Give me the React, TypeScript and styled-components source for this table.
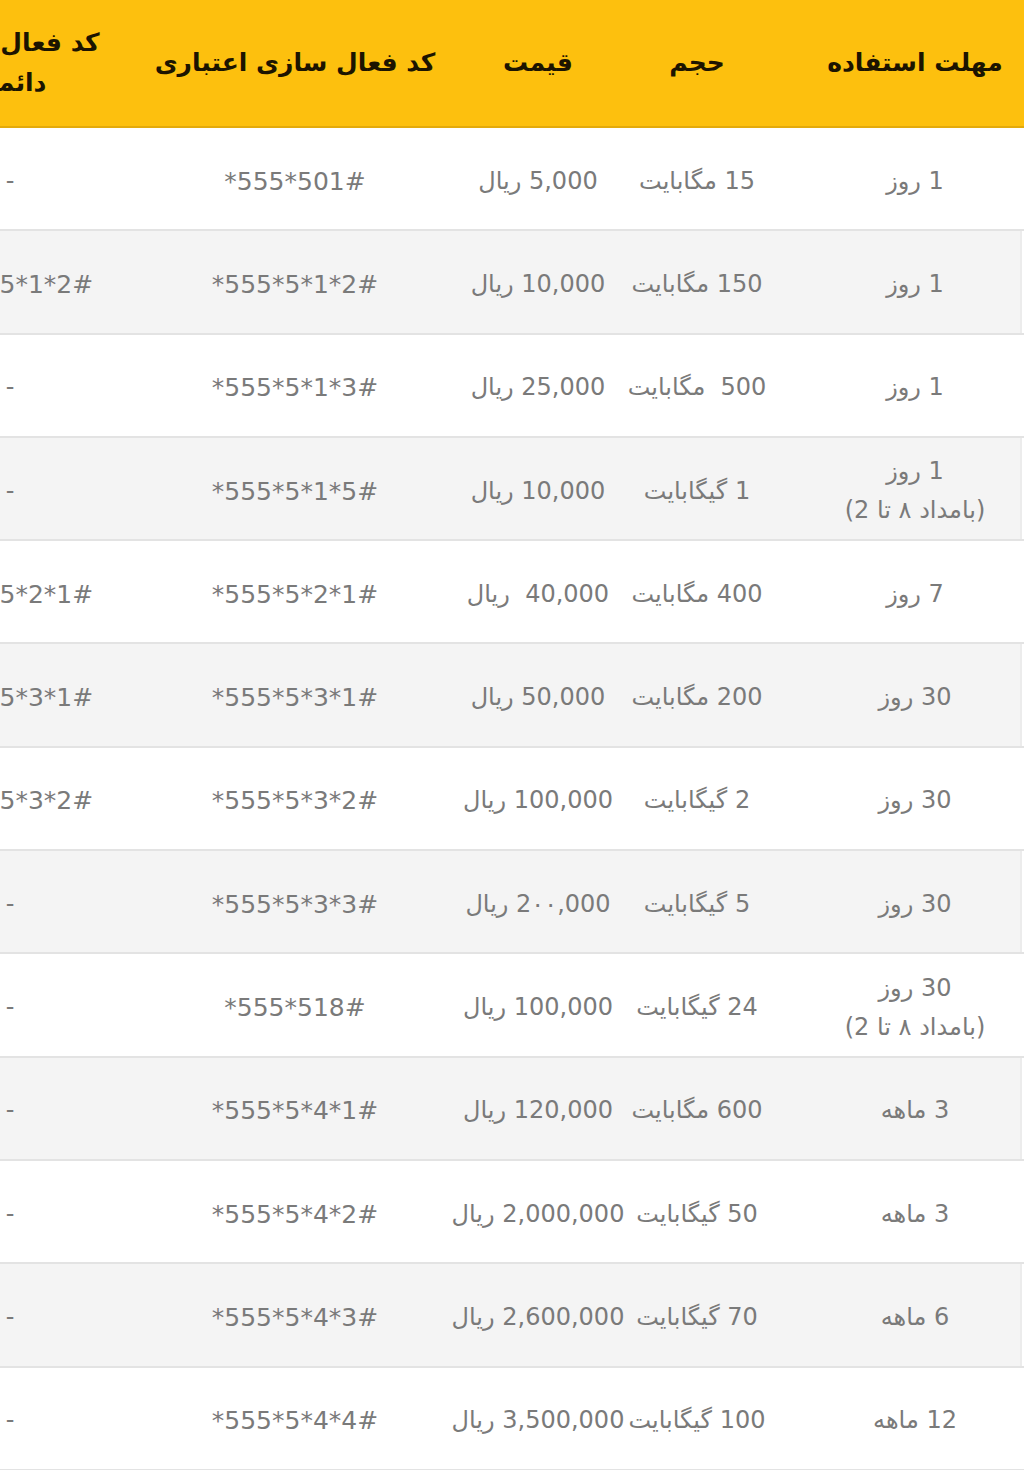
import { FC } from "react";
import styled, { createGlobalStyle } from "styled-components";

type Plan = {
  period: string;
  note?: boolean;
  volume: string;
  price: string;
  code: string;
  permanent?: string;
};

const plans: Plan[] = [
  { period: "1 روز", volume: "15 مگابایت", price: "5,000 ریال", code: "*555*501#" },
  { period: "1 روز", volume: "150 مگابایت", price: "10,000 ریال", code: "*555*5*1*2#", permanent: "*555*5*1*2#" },
  { period: "1 روز", volume: "500\u00a0 مگابایت", price: "25,000 ریال", code: "*555*5*1*3#" },
  { period: "1 روز", note: true, volume: "1 گیگابایت", price: "10,000 ریال", code: "*555*5*1*5#" },
  { period: "7 روز", volume: "400 مگابایت", price: "40,000\u00a0 ریال", code: "*555*5*2*1#", permanent: "*555*5*2*1#" },
  { period: "30 روز", volume: "200 مگابایت", price: "50,000 ریال", code: "*555*5*3*1#", permanent: "*555*5*3*1#" },
  { period: "30 روز", volume: "2 گیگابایت", price: "100,000 ریال", code: "*555*5*3*2#", permanent: "*555*5*3*2#" },
  { period: "30 روز", volume: "5 گیگابایت", price: "2۰۰,000 ریال", code: "*555*5*3*3#" },
  { period: "30 روز", note: true, volume: "24 گیگابایت", price: "100,000 ریال", code: "*555*518#" },
  { period: "3 ماهه", volume: "600 مگابایت", price: "120,000 ریال", code: "*555*5*4*1#" },
  { period: "3 ماهه", volume: "50 گیگابایت", price: "2,000,000 ریال", code: "*555*5*4*2#" },
  { period: "6 ماهه", volume: "70 گیگابایت", price: "2,600,000 ریال", code: "*555*5*4*3#" },
  { period: "12 ماهه", volume: "100 گیگابایت", price: "3,500,000 ریال", code: "*555*5*4*4#" },
];

const GlobalStyle = createGlobalStyle`
  html, body {
    margin: 0;
    padding: 0;
    background: #ffffff;
    overflow: hidden;
  }
  body {
    font-family: "DejaVu Sans", "Noto Sans", sans-serif;
  }
`;

const columns = "214px 222px 96px 390px 180px";

const Page = styled.div`
  width: 1024px;
  height: 1470px;
  overflow: hidden;
  direction: rtl;
`;

const Table = styled.div`
  width: 1104px;
`;

const HeaderRow = styled.div`
  display: grid;
  grid-template-columns: ${columns};
  height: 126px;
  background: #fdc00e;
  box-shadow: 0 2px 0 #e3aa0b, 0 4px 3px rgba(255, 226, 140, 0.5);
  margin-bottom: 2px;
  padding-right: 2px;
`;

const HeadCell = styled.div`
  display: flex;
  align-items: center;
  justify-content: center;
  text-align: center;
  white-space: nowrap;
  font-weight: bold;
  font-size: 25px;
  line-height: 40px;
  color: #1c1400;
`;

const Row = styled.div<{ $shaded: boolean }>`
  display: grid;
  grid-template-columns: ${columns};
  height: 101.3px;
  border-bottom: 2px solid #e3e3e3;
  background: ${(p) => (p.$shaded ? "#f4f4f4" : "#ffffff")};
  box-shadow: ${(p) => (p.$shaded ? "inset -2px 0 0 #fff, inset -4px 0 0 #ececec" : "none")};
  padding-right: 2px;
`;

const Cell = styled.div`
  display: flex;
  flex-direction: column;
  align-items: center;
  justify-content: center;
  padding-top: 5px;
  white-space: nowrap;
  font-size: 24px;
  line-height: 39px;
  color: #7a7a7a;
`;

const Code = styled.span`
  direction: ltr;
  unicode-bidi: isolate;
  font-size: 25px;
`;

const PlanRow: FC<{ plan: Plan; shaded: boolean }> = ({ plan, shaded }) => (
  <Row $shaded={shaded}>
    <Cell>
      <span>{plan.period}</span>
      {plan.note && <span>(بامداد ۸ تا 2)</span>}
    </Cell>
    <Cell>{plan.volume}</Cell>
    <Cell>{plan.price}</Cell>
    <Cell>
      <Code>{plan.code}</Code>
    </Cell>
    <Cell>{plan.permanent ? <Code>{plan.permanent}</Code> : "-"}</Cell>
  </Row>
);

const App: FC = () => {
  return (
    <Page>
      <GlobalStyle />
      <Table>
        <HeaderRow>
          <HeadCell>مهلت استفاده</HeadCell>
          <HeadCell>حجم</HeadCell>
          <HeadCell>قیمت</HeadCell>
          <HeadCell>کد فعال سازی اعتباری</HeadCell>
          <HeadCell>
            کد فعال سازی
            <br />
            دائمی
          </HeadCell>
        </HeaderRow>
        {plans.map((plan, i) => (
          <PlanRow key={i} plan={plan} shaded={i % 2 === 1} />
        ))}
      </Table>
    </Page>
  );
};

export default App;
